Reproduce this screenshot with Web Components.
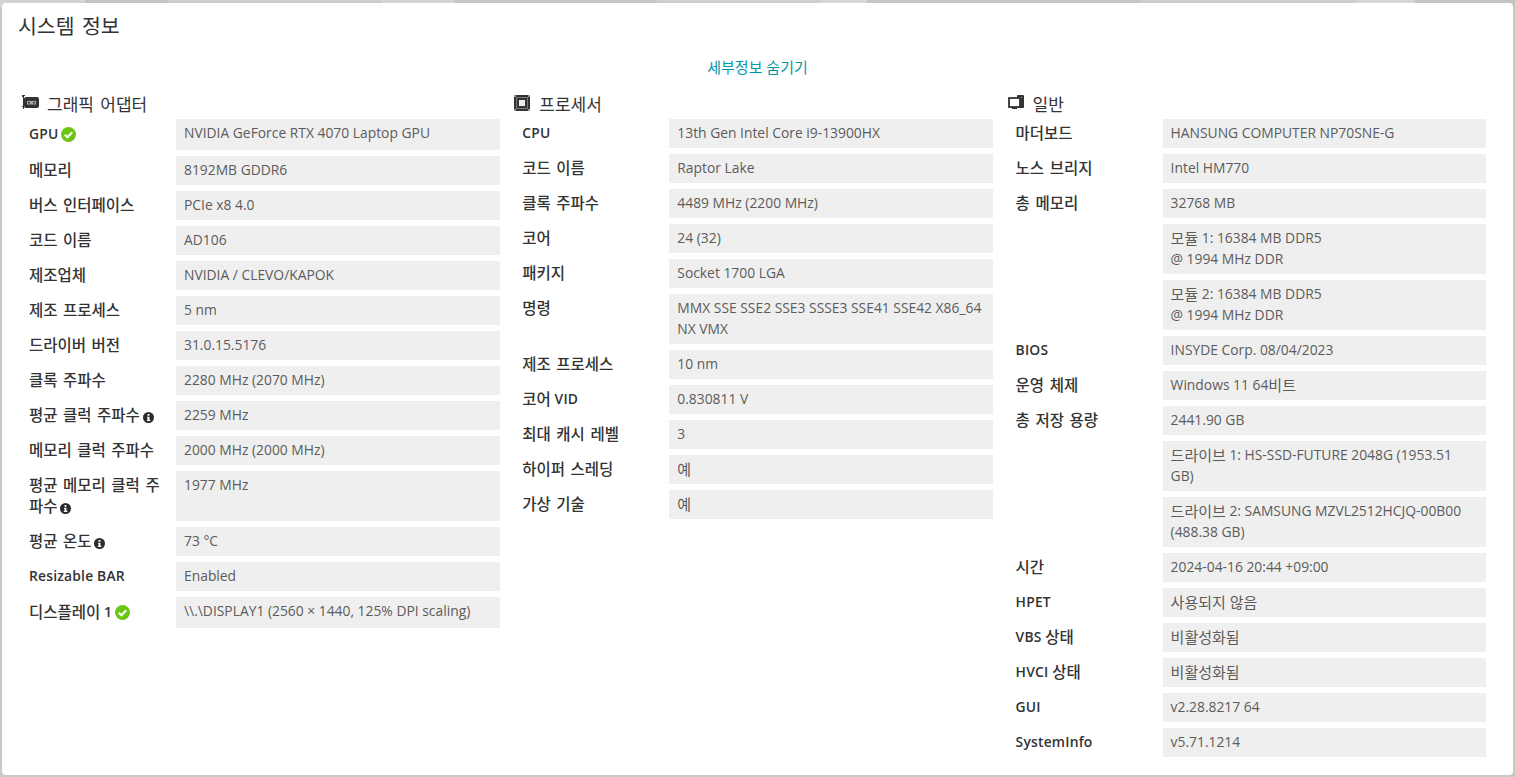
<!DOCTYPE html>
<html lang="ko">
<head>
<meta charset="utf-8">
<title>시스템 정보</title>
<style>
  html, body { margin: 0; height: 100%; }
  body {
    overflow: hidden;
    box-sizing: border-box;
    padding: 3px 2px 2px;
    font-family: "Open Sans", "Noto Sans CJK KR", sans-serif;
    background: #c8c8c8 linear-gradient(90deg,
      #d2d2d2 0 85px, #c4c4c4 85px 169px, #cdcdcd 169px 382px, #d5d5d5 382px 454px,
      #c6c6c6 454px 657px, #cfcfcf 657px 821px, #d6d6d6 821px 867px, #c5c5c5 867px 1140px,
      #cecece 1140px 1357px, #d6d6d6 1357px 1415px, #c4c4c4 1415px) no-repeat top / 100% 8px;
  }
</style>
</head>
<body>

<system-panel heading="시스템 정보" toggle="세부정보 숨기기">
  <info-section heading="그래픽 어댑터" icon="gpu">
    <info-row tall><span slot="label">GPU <state-icon kind="ok"></state-icon></span>NVIDIA GeForce RTX 4070 Laptop GPU</info-row>
    <info-row label="메모리">8192MB GDDR6</info-row>
    <info-row label="버스 인터페이스">PCIe x8 4.0</info-row>
    <info-row label="코드 이름">AD106</info-row>
    <info-row label="제조업체">NVIDIA / CLEVO/KAPOK</info-row>
    <info-row label="제조 프로세스">5 nm</info-row>
    <info-row label="드라이버 버전">31.0.15.5176</info-row>
    <info-row label="클록 주파수">2280 MHz (2070 MHz)</info-row>
    <info-row><span slot="label">평균 클럭 주파수 <state-icon kind="info"></state-icon></span>2259 MHz</info-row>
    <info-row label="메모리 클럭 주파수">2000 MHz (2000 MHz)</info-row>
    <info-row><span slot="label">평균 메모리 클럭 주파수 <state-icon kind="info"></state-icon></span>1977 MHz</info-row>
    <info-row><span slot="label">평균 온도 <state-icon kind="info"></state-icon></span>73 °C</info-row>
    <info-row label="Resizable BAR">Enabled</info-row>
    <info-row tall><span slot="label">디스플레이 1 <state-icon kind="ok"></state-icon></span>\\.\DISPLAY1 (2560 × 1440, 125% DPI scaling)</info-row>
  </info-section>

  <info-section heading="프로세서" icon="cpu">
    <info-row label="CPU">13th Gen Intel Core i9-13900HX</info-row>
    <info-row label="코드 이름">Raptor Lake</info-row>
    <info-row label="클록 주파수">4489 MHz (2200 MHz)</info-row>
    <info-row label="코어">24 (32)</info-row>
    <info-row label="패키지">Socket 1700 LGA</info-row>
    <info-row label="명령">MMX SSE SSE2 SSE3 SSSE3 SSE41 SSE42 X86_64<br>NX VMX</info-row>
    <info-row label="제조 프로세스">10 nm</info-row>
    <info-row label="코어 VID">0.830811 V</info-row>
    <info-row label="최대 캐시 레벨">3</info-row>
    <info-row label="하이퍼 스레딩">예</info-row>
    <info-row label="가상 기술">예</info-row>
  </info-section>

  <info-section heading="일반" icon="pc">
    <info-row label="마더보드">HANSUNG COMPUTER NP70SNE-G</info-row>
    <info-row label="노스 브리지">Intel HM770</info-row>
    <info-row label="총 메모리">32768 MB</info-row>
    <info-row>모듈 1: 16384 MB DDR5<br>@ 1994 MHz DDR</info-row>
    <info-row>모듈 2: 16384 MB DDR5<br>@ 1994 MHz DDR</info-row>
    <info-row label="BIOS">INSYDE Corp. 08/04/2023</info-row>
    <info-row label="운영 체제">Windows 11 64비트</info-row>
    <info-row label="총 저장 용량">2441.90 GB</info-row>
    <info-row>드라이브 1: HS-SSD-FUTURE 2048G (1953.51<br>GB)</info-row>
    <info-row>드라이브 2: SAMSUNG MZVL2512HCJQ-00B00<br>(488.38 GB)</info-row>
    <info-row label="시간">2024-04-16 20:44 +09:00</info-row>
    <info-row label="HPET">사용되지 않음</info-row>
    <info-row label="VBS 상태">비활성화됨</info-row>
    <info-row label="HVCI 상태">비활성화됨</info-row>
    <info-row label="GUI">v2.28.8217 64</info-row>
    <info-row label="SystemInfo">v5.71.1214</info-row>
  </info-section>
</system-panel>

<script>
'use strict';

const sectionIcons = {
  gpu: `<path d="M0 0h3v1H2v13H1v-2H0V11h1V2H0z"/><rect x="2" y="2" width="15" height="11" rx="2"/><rect x="5" y="6" width="9" height="3.500" fill="#aaa"/><rect x="6" y="7" width="2" height="1.500"/><circle cx="12" cy="7.700" r="1"/>`,
  cpu: `<rect width="16" height="16" rx="1"/><path d="M0 0h2v2H0zM14 0h2v2h-2zM0 14h2v2H0zM14 14h2v2h-2z" fill="#999"/><rect x="2.500" y="2.500" width="11" height="11" fill="none" stroke="#777"/><rect x="5" y="5" width="6" height="6" fill="#eee"/>`,
  pc: `<rect x="9" y="0" width="7" height="13" rx="1"/><path d="M11 2h3v1h-3z" fill="#aaa"/><rect x="1" y="3" width="11" height="9" fill="#fff" stroke="currentColor" stroke-width="1.800"/><path d="M4 12h5v2H4z"/>`
};

// wraps the Hangul runs of a html string, they are set larger than the latin text
function markHangul(html) {
  return html.replace(/[가-힣]+(?: [가-힣]+)*/g, '<ko-text>$&</ko-text>');
}

function markLightText(root) {
  for (let node of Array.from(root.childNodes)) {
    if (node.nodeType === Node.TEXT_NODE) {
      if (/[가-힣]/.test(node.textContent)) {
        let box = document.createElement('template');
        box.innerHTML = markHangul(node.textContent);
        node.replaceWith(box.content);
      }
    } else if (node.nodeType === Node.ELEMENT_NODE && node.localName !== 'ko-text') {
      markLightText(node);
    }
  }
}

class KoText extends HTMLElement {
  connectedCallback() {
    if (this.shadowRoot) return;
    this.attachShadow({mode: 'open'});
    // no whitespace around the slot, this host is inline and it would show as a space
    this.shadowRoot.innerHTML = `<style>
        :host {
          font-size: var(--ko-size, 1em);
          font-weight: var(--ko-weight, inherit);
          word-spacing: var(--ko-space, 0);
          letter-spacing: 0;
          line-height: 1;
          vertical-align: -1px;
        }
      </style><slot></slot>`;
  }
}

class SystemPanel extends HTMLElement {
  connectedCallback() {
    this.attachShadow({mode: 'open'});
    this.shadowRoot.innerHTML = `
      <style>
        :host {
          display: block;
          height: 772px;
          box-sizing: border-box;
          background: #fff;
          border-radius: 4px;
          padding: 13px 27px 0 19px;
          color: #444;
        }
        h1 {
          margin: 0 0 0 -3px;
          font-size: 20.5px;
          font-weight: 400;
          word-spacing: 2px;
          line-height: 20px;
          color: #333;
        }
        a {
          display: block;
          margin: 21px -27px 14px -19px;
          text-align: center;
          font-size: 15px;
          line-height: 20px;
          color: #0097a7;
          text-decoration: none;
        }
        .columns {
          display: grid;
          grid-template-columns: repeat(3, 478.8px);
          column-gap: 14.5px;
        }
      </style>
      <h1>${this.getAttribute('heading')}</h1>
      <a href="#">${this.getAttribute('toggle')}</a>
      <div class="columns"><slot></slot></div>
    `;
  }
}

class InfoSection extends HTMLElement {
  connectedCallback() {
    let kind = this.getAttribute('icon');
    let wide = kind === 'cpu' ? 16 : 17;
    this.attachShadow({mode: 'open'});
    this.shadowRoot.innerHTML = `
      <style>
        :host { display: block; }
        h2 {
          display: flex;
          align-items: center;
          gap: ${kind === 'cpu' ? 9 : 8}px;
          margin: 0 0 4px;
          height: 24px;
          font-size: 17px;
          font-weight: 400;
          word-spacing: 2px;
          color: #333;
        }
        svg { width: ${wide}px; height: 16px; color: #333; fill: currentColor; flex: none; margin-left: ${kind === 'gpu' ? 1 : 0}px; }
        .rows { display: flex; flex-direction: column; gap: 6px; }
      </style>
      <h2><svg viewBox="0 0 ${wide} 16">${sectionIcons[kind] || ''}</svg>${this.getAttribute('heading')}</h2>
      <div class="rows"><slot></slot></div>
    `;
  }
}

class InfoRow extends HTMLElement {
  connectedCallback() {
    let label = markHangul(this.getAttribute('label') || '');
    markLightText(this);
    this.attachShadow({mode: 'open'});
    this.shadowRoot.innerHTML = `
      <style>
        :host { display: flex; font-size: 13.85px; line-height: 21px; }
        .label {
          box-sizing: border-box;
          width: 155px;
          flex: none;
          padding: 3px 8px 5px 8px;
          font-weight: 600;
          letter-spacing: .2px;
          color: #333;
          --ko-size: 15.5px;
          --ko-weight: 500;
          --ko-space: 1.5px;
        }
        .value {
          flex: 1;
          min-width: 0;
          padding: 3px 8px 5px 8px;
          background: #efefef;
          color: #5c5c5c;
          --ko-size: 15px;
        }
        :host([tall]) .value { padding-bottom: 7px; }
        :host([tall]) .label { padding-top: 4px; }
      </style>
      <div class="label"><slot name="label">${label}</slot></div>
      <div class="value"><slot></slot></div>
    `;
  }
}

class StateIcon extends HTMLElement {
  connectedCallback() {
    let ok = this.getAttribute('kind') === 'ok';
    let size = ok ? 15 : 11;
    this.attachShadow({mode: 'open'});
    this.shadowRoot.innerHTML = `
      <style>
        :host {
          display: inline-block;
          vertical-align: -3px;
          margin-left: -1px;
          line-height: 0;
        }
      </style>
      <svg width="${size}" height="${size}" viewBox="0 0 16 16">${ok
        ? '<circle cx="8" cy="8" r="8" fill="#6cc513"/><path d="M4 8.200l2.800 2.800L12 5.600" fill="none" stroke="#fff" stroke-width="2.200"/>'
        : '<circle cx="8" cy="8" r="8" fill="#2b2b2b"/><path d="M6.600 3h2.800v2.400H6.600zM6 7h3.400v4.400H10.600V13H5.600v-1.600h1V8.600H6z" fill="#fff"/>'}</svg>
    `;
  }
}

customElements.define('ko-text', KoText);
customElements.define('system-panel', SystemPanel);
customElements.define('info-section', InfoSection);
customElements.define('info-row', InfoRow);
customElements.define('state-icon', StateIcon);
</script>
</body>
</html>
